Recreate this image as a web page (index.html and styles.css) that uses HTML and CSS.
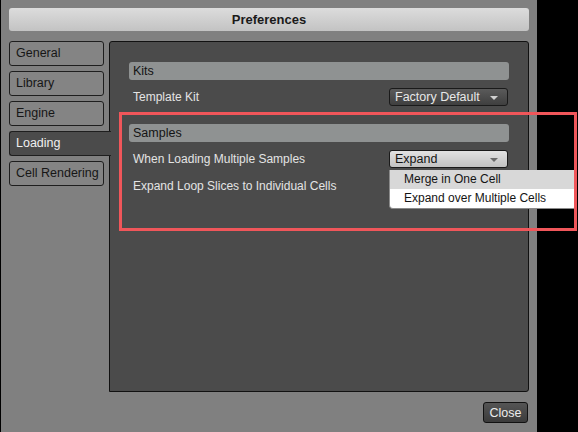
FILE: index.html
```html
<!DOCTYPE html>
<html lang="en">
<head>
  <meta charset="UTF-8" />
  <title>Preferences</title>
  <link rel="stylesheet" href="styles.css">
</head>
<body>
  <div class="window">
    <div class="title-bar">Preferences</div>

    <div class="main">
      <div class="tabs">
        <div class="tab">General</div>
        <div class="tab">Library</div>
        <div class="tab">Engine</div>
        <div class="tab active">Loading</div>
        <div class="tab">Cell Rendering</div>
      </div>

      <div class="panel">
        <div class="section">Kits</div>
        <div class="row">
          <span class="label">Template Kit</span>
          <div class="select">Factory Default<span class="arrow"></span></div>
        </div>

        <div class="section samples">Samples</div>
        <div class="row">
          <span class="label">When Loading Multiple Samples</span>
          <div class="select open">Expand<span class="arrow"></span></div>
        </div>
        <div class="row">
          <span class="label">Expand Loop Slices to Individual Cells</span>
        </div>
      </div>
    </div>

    <div class="footer">
      <button class="btn">Close</button>
    </div>

    <div class="menu">
      <div class="menu-item hover">Merge in One Cell</div>
      <div class="menu-item">Expand over Multiple Cells</div>
    </div>

    <div class="highlight"></div>
  </div>
</body>
</html>
```

FILE: styles.css
```css
body {
  margin: 0;
  background: #000;
  font-family: "Liberation Sans", Arial, sans-serif;
  font-size: 12px;
}

.window {
  position: relative;
  width: 536px;
  height: 432px;
  margin-left: 1px;
  background: #808080;
  padding: 8px 0 0 8px;
  box-sizing: border-box;
}

.title-bar {
  width: 520px;
  height: 23px;
  line-height: 23px;
  border-radius: 3px;
  background: linear-gradient(to bottom, #dcdcdc, #c3c3c3);
  color: #1a1a1a;
  font-size: 13px;
  font-weight: bold;
  text-align: center;
}

.main {
  display: flex;
  margin-top: 10px;
}

.tabs {
  display: flex;
  flex-direction: column;
  gap: 5px;
  width: 101px;
  flex-shrink: 0;
}

.tab {
  width: 95px;
  height: 25px;
  line-height: 23px;
  box-sizing: border-box;
  padding-left: 6px;
  border: 1px solid #1e1e1e;
  border-radius: 3px;
  background: #848484;
  color: #161616;
  font-size: 12.5px;
}

.tab.active {
  position: relative;
  z-index: 1;
  width: 102px;
  border-right: none;
  border-radius: 3px 0 0 3px;
  background: #4b4b4b;
  color: #f0f0f0;
}

.panel {
  width: 420px;
  height: 351px;
  box-sizing: border-box;
  margin-left: -1px;
  padding: 20px 19px 0 19px;
  border: 1px solid #111;
  border-radius: 3px 3px 3px 0;
  background: #4b4b4b;
}

.section {
  height: 18px;
  line-height: 18px;
  padding-left: 4px;
  border-radius: 3px;
  background: #8f9292;
  color: #141414;
  font-size: 12.5px;
}

.section.samples {
  margin-top: 18px;
}

.row {
  display: flex;
  align-items: center;
  justify-content: space-between;
  height: 18px;
  margin-top: 8px;
  padding: 0 1px 0 4px;
  color: #e4e4e4;
}

.row + .row {
  margin-top: 9px;
}

.select {
  position: relative;
  width: 119px;
  height: 18px;
  line-height: 16px;
  box-sizing: border-box;
  padding-left: 5px;
  border: 1px solid #1a1a1a;
  border-radius: 3px;
  background: linear-gradient(to bottom, #5a5a5a, #3f3f3f);
  color: #e8e8e8;
  font-size: 12.5px;
}

.select.open {
  background: linear-gradient(to bottom, #e2e2e2, #c2c2c2);
  color: #141414;
}

.arrow {
  position: absolute;
  right: 9px;
  top: 7px;
  width: 0;
  height: 0;
  border-left: 4px solid transparent;
  border-right: 4px solid transparent;
  border-top: 4px solid #d0d0d0;
}

.select.open .arrow {
  border-top-color: #6a6a6a;
}

.footer {
  display: flex;
  justify-content: flex-end;
  width: 520px;
  margin-top: 10px;
}

.btn {
  width: 45px;
  height: 21px;
  margin-right: 1px;
  padding: 0;
  border: 1px solid #111;
  border-radius: 3px;
  background: linear-gradient(to bottom, #555, #3b3b3b);
  color: #ececec;
  font-family: inherit;
  font-size: 12.5px;
}

.menu {
  position: absolute;
  left: 388px;
  top: 170px;
  width: 186px;
  border: 1px solid #8a8a8a;
  border-top: none;
  border-radius: 0 0 4px 4px;
  background: #fff;
  overflow: hidden;
}

.menu-item {
  height: 19px;
  line-height: 19px;
  padding-left: 14px;
  color: #141414;
}

.menu-item.hover {
  background: #d8d8d8;
}

.highlight {
  position: absolute;
  left: 118px;
  top: 112px;
  width: 458px;
  height: 119px;
  box-sizing: border-box;
  border: 3px solid #f0565a;
}
```
